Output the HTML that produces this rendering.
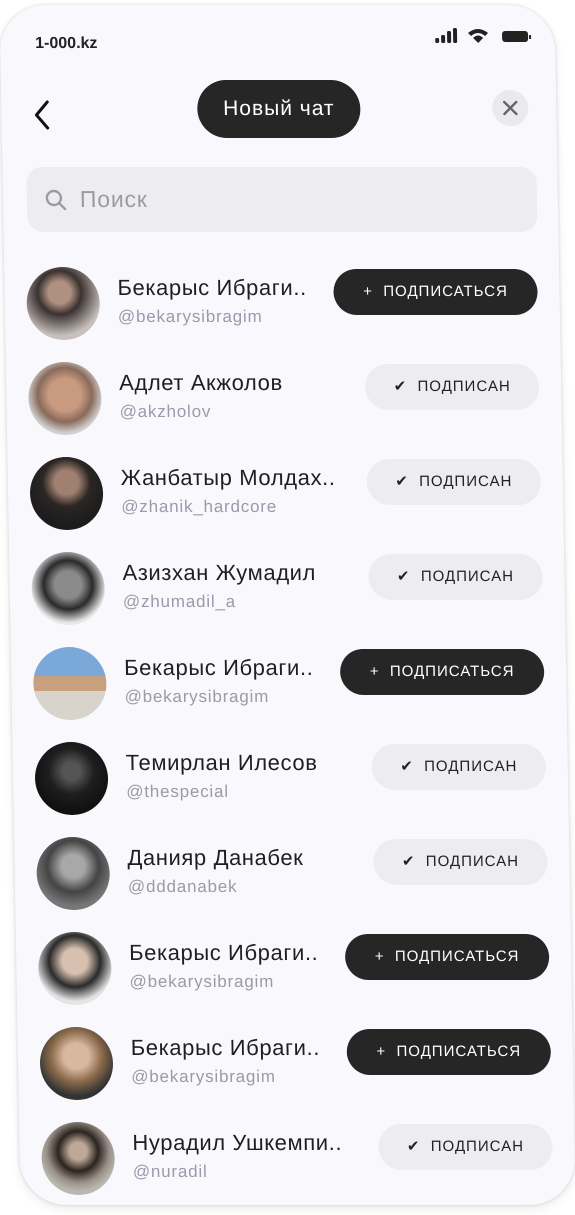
<!DOCTYPE html>
<html><head><meta charset="utf-8"><style>
html,body{margin:0;padding:0;background:#fff;width:575px;height:1215px;overflow:hidden;font-family:"Liberation Sans",sans-serif}
.card{position:absolute;left:10px;top:5px;width:555px;height:1200px;background:#f9f9fd;border-radius:46px;transform:skewX(1deg);transform-origin:center;box-shadow:0 0 3px rgba(0,0,0,.15),0 4px 10px rgba(0,0,0,.08)}
.a{position:absolute}
.st{left:35px;top:30px;font-weight:bold;font-size:16px;color:#222}
.title{left:196px;top:75px;width:163px;height:58px;border-radius:29px;background:#262626;color:#fff;font-size:21px;letter-spacing:1px;line-height:58px;text-align:center}
.close{left:491px;top:85px;width:36px;height:36px;border-radius:50%;background:#e9e9ee}
.search{left:24px;top:162px;width:510px;height:65px;border-radius:16px;background:#ededf0;color:#9b9ba6;font-size:23px;letter-spacing:.8px;line-height:65px}
.row{position:absolute;left:0;width:555px;height:80px}
.av{position:absolute;left:22px;top:4px;width:73px;height:73px;border-radius:50%}
.nm{position:absolute;left:113px;top:12px;font-size:22px;color:#1f1f1f;letter-spacing:.6px}
.hd{position:absolute;left:113px;top:44px;font-size:17px;color:#9a9aab;letter-spacing:.8px}
.btn{position:absolute;right:22px;top:6px;height:46px;border-radius:23px;font-size:15px;line-height:46px;text-align:center;letter-spacing:1px}
.sub{width:204px;background:#262626;color:#fff}
.ok{width:174px;background:#ededf1;color:#222}
</style></head><body>
<div class="card">
<div class="a st">1-000.kz</div>
<svg class="a" style="left:435px;top:22px" width="100" height="20" viewBox="0 0 100 20">
<rect x="0" y="11" width="4" height="5" rx="1.5" fill="#222"/><rect x="6" y="8" width="4" height="8" rx="1.5" fill="#222"/><rect x="12" y="4" width="4" height="12" rx="1.5" fill="#222"/><rect x="18" y="1" width="4" height="15" rx="1.5" fill="#222"/>
<path d="M33 6 Q43 -2 53 6 L50 9 Q43 3 36 9Z M38 11 Q43 6 48 11 L43 16Z" fill="#222"/>
<rect x="67" y="4" width="26" height="11" rx="3" fill="#222"/><rect x="94" y="8" width="2" height="4" fill="#222"/>
</svg>
<svg class="a" style="left:31px;top:95px" width="20" height="30" viewBox="0 0 20 30"><path d="M15 2 L4 15 L15 28" stroke="#111" stroke-width="3" fill="none" stroke-linecap="round" stroke-linejoin="round"/></svg>
<div class="a title">Новый чат</div>
<div class="a close"><svg width="36" height="36" viewBox="0 0 36 36"><path d="M12 12 L24 24 M24 12 L12 24" stroke="#666" stroke-width="2.4" stroke-linecap="round"/></svg></div>
<div class="a search"><svg style="position:absolute;left:18px;top:22px" width="22" height="22" viewBox="0 0 22 22"><circle cx="9" cy="9" r="7" stroke="#9b9ba6" stroke-width="2.4" fill="none"/><path d="M14 14 L20 20" stroke="#9b9ba6" stroke-width="2.4" stroke-linecap="round"/></svg><span style="position:absolute;left:53px">Поиск</span></div>

<div class="row" style="top:258px"><div class="av" style="background:radial-gradient(circle at 45% 35%,#b09080 0 18%,#3a3230 35%,#c8c0bc 70%)"></div><div class="nm">Бекарыс Ибраги..</div><div class="hd">@bekarysibragim</div><div class="btn sub">+&nbsp; ПОДПИСАТЬСЯ</div></div>
<div class="row" style="top:353px"><div class="av" style="background:radial-gradient(circle at 50% 45%,#c89a80 0 30%,#8a6a5a 50%,#d0d0d0 70%)"></div><div class="nm">Адлет Акжолов</div><div class="hd">@akzholov</div><div class="btn ok">✔&nbsp; ПОДПИСАН</div></div>
<div class="row" style="top:448px"><div class="av" style="background:radial-gradient(circle at 50% 35%,#a08070 0 20%,#2a2624 40%,#1c1c1c 70%)"></div><div class="nm">Жанбатыр Молдах..</div><div class="hd">@zhanik_hardcore</div><div class="btn ok">✔&nbsp; ПОДПИСАН</div></div>
<div class="row" style="top:543px"><div class="av" style="background:radial-gradient(circle at 50% 45%,#8a8a8a 0 25%,#2a2a2a 45%,#e8e8e8 70%)"></div><div class="nm">Азизхан Жумадил</div><div class="hd">@zhumadil_a</div><div class="btn ok">✔&nbsp; ПОДПИСАН</div></div>
<div class="row" style="top:638px"><div class="av" style="background:linear-gradient(#7aa8d8 0 40%,#c8a080 40% 60%,#d8d4cc 60%)"></div><div class="nm">Бекарыс Ибраги..</div><div class="hd">@bekarysibragim</div><div class="btn sub">+&nbsp; ПОДПИСАТЬСЯ</div></div>
<div class="row" style="top:733px"><div class="av" style="background:radial-gradient(circle at 50% 40%,#555 0 15%,#1e1e1e 40%,#111 70%)"></div><div class="nm">Темирлан Илесов</div><div class="hd">@thespecial</div><div class="btn ok">✔&nbsp; ПОДПИСАН</div></div>
<div class="row" style="top:828px"><div class="av" style="background:radial-gradient(circle at 50% 40%,#a8a8a8 0 20%,#444 45%,#777 70%)"></div><div class="nm">Данияр Данабек</div><div class="hd">@dddanabek</div><div class="btn ok">✔&nbsp; ПОДПИСАН</div></div>
<div class="row" style="top:923px"><div class="av" style="background:radial-gradient(circle at 50% 40%,#d8c0b0 0 22%,#2a2a2a 45%,#e4e4e4 70%)"></div><div class="nm">Бекарыс Ибраги..</div><div class="hd">@bekarysibragim</div><div class="btn sub">+&nbsp; ПОДПИСАТЬСЯ</div></div>
<div class="row" style="top:1018px"><div class="av" style="background:radial-gradient(circle at 50% 40%,#d8b8a0 0 22%,#8a6a4a 45%,#333 70%)"></div><div class="nm">Бекарыс Ибраги..</div><div class="hd">@bekarysibragim</div><div class="btn sub">+&nbsp; ПОДПИСАТЬСЯ</div></div>
<div class="row" style="top:1113px"><div class="av" style="background:radial-gradient(circle at 50% 40%,#c0a898 0 15%,#2a2420 35%,#9a9088 55%,#b8b8b0 70%)"></div><div class="nm">Нурадил Ушкемпи..</div><div class="hd">@nuradil</div><div class="btn ok">✔&nbsp; ПОДПИСАН</div></div>
</div>
</body></html>
